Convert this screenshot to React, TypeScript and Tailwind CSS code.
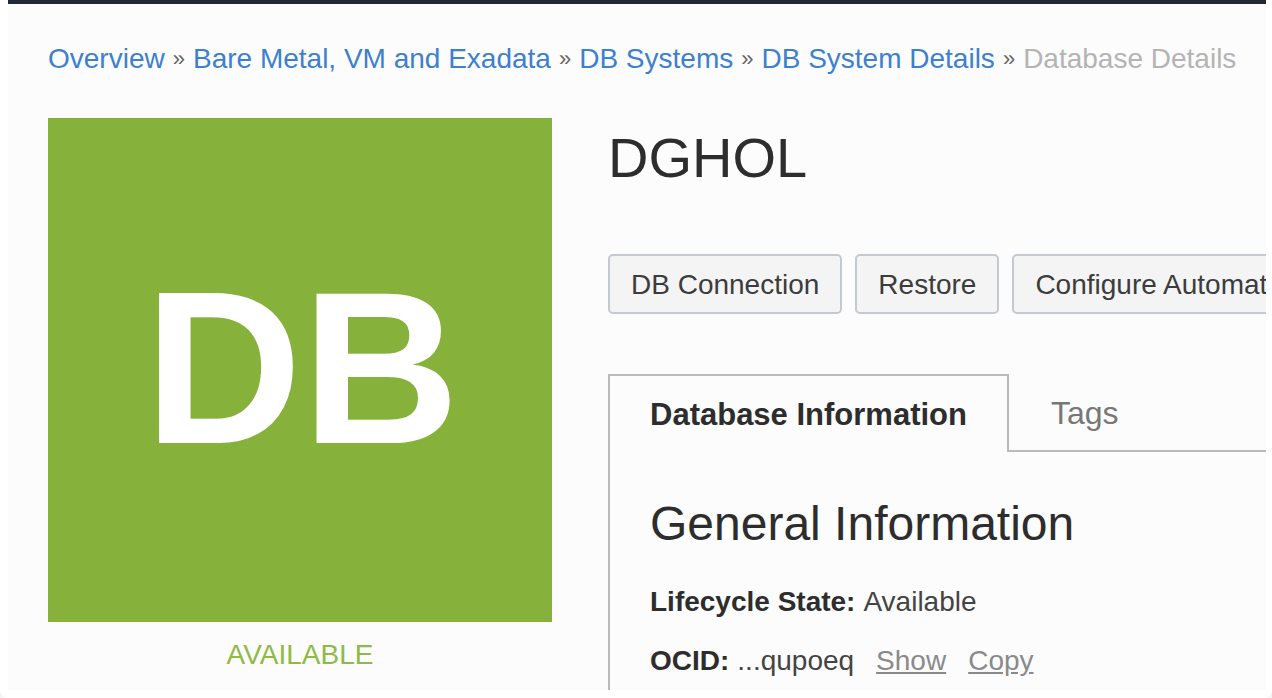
import { Fragment } from "react";

const crumbs = ["Overview", "Bare Metal, VM and Exadata", "DB Systems", "DB System Details"];
const actions = ["DB Connection", "Restore", "Configure Automatic Backups"];

function Breadcrumbs() {
  return (
    <nav aria-label="Breadcrumb" className="flex items-center gap-2 whitespace-nowrap text-[28px] leading-8">
      {crumbs.map((label) => (
        <Fragment key={label}>
          <a href="#" className="text-[#3c80d0]">
            {label}
          </a>
          <span className="text-[22px] leading-8 text-[#666]">»</span>
        </Fragment>
      ))}
      <span className="text-[#b4b4b4]">Database Details</span>
    </nav>
  );
}

function StatusCard() {
  return (
    <aside className="w-[504px] shrink-0">
      <div className="flex aspect-square items-center justify-center bg-[#86b13b] pb-1 pl-1 text-[218px] leading-none font-bold text-white">
        DB
      </div>
      <p className="mt-[17px] text-center text-[28px] leading-8 text-[#8fba44]">AVAILABLE</p>
    </aside>
  );
}

function Tabs() {
  return (
    <div role="tablist" className="mt-[60px] flex h-[78px] items-stretch">
      <button
        role="tab"
        aria-selected="true"
        className="shrink-0 border-2 border-b-0 border-[#bababa] px-10 pt-0.5 text-[31px] leading-9 font-bold text-[#2d2d2d]"
      >
        Database Information
      </button>
      <button
        role="tab"
        aria-selected="false"
        className="shrink-0 border-b-2 border-[#bababa] px-[42px] pt-0.5 text-[32px] leading-9 text-[#777]"
      >
        Tags
      </button>
      <div className="grow border-b-2 border-[#bababa]" />
    </div>
  );
}

export default function App() {
  return (
    <div className="bg-[#f4f4f4] font-['Liberation_Sans',Arial,sans-serif] text-[#2d2d2d]">
      <div className="flex h-screen flex-col rounded-b-lg bg-white pr-1.5 pb-2 pl-2">
        <main className="min-h-0 grow overflow-hidden border-t-4 border-[#222834] bg-[#fcfcfc] pt-[39px] pl-10">
          <Breadcrumbs />
          <div className="mt-[43px] flex gap-14">
            <StatusCard />
            <section className="min-w-0 grow overflow-hidden">
              <h1 className="mt-2 text-[56px] leading-16">DGHOL</h1>
              <div className="mt-16 flex gap-[13px]">
                {actions.map((label) => (
                  <button
                    key={label}
                    className="h-[60px] shrink-0 rounded-[5px] border-2 border-[#c4c9d0] bg-[#f4f4f4] px-[21px] pt-0.5 text-[28px] leading-8 text-[#3c3c3c]"
                  >
                    {label}
                  </button>
                ))}
              </div>
              <Tabs />
              <div role="tabpanel" className="border-l-2 border-[#bababa] px-10 pt-11 pb-10">
                <h2 className="text-[48px] leading-14">General Information</h2>
                <dl className="mt-[34px] flex flex-col gap-[27px] text-[28px] leading-8">
                  <div className="flex gap-2">
                    <dt className="font-bold">Lifecycle State:</dt>
                    <dd className="text-[#444]">Available</dd>
                  </div>
                  <div className="flex gap-2">
                    <dt className="font-bold">OCID:</dt>
                    <dd className="flex gap-[22px] text-[#444]">
                      ...qupoeq
                      <button className="text-[#8a8a8a] underline">Show</button>
                      <button className="text-[#8a8a8a] underline">Copy</button>
                    </dd>
                  </div>
                </dl>
              </div>
            </section>
          </div>
        </main>
      </div>
    </div>
  );
}
